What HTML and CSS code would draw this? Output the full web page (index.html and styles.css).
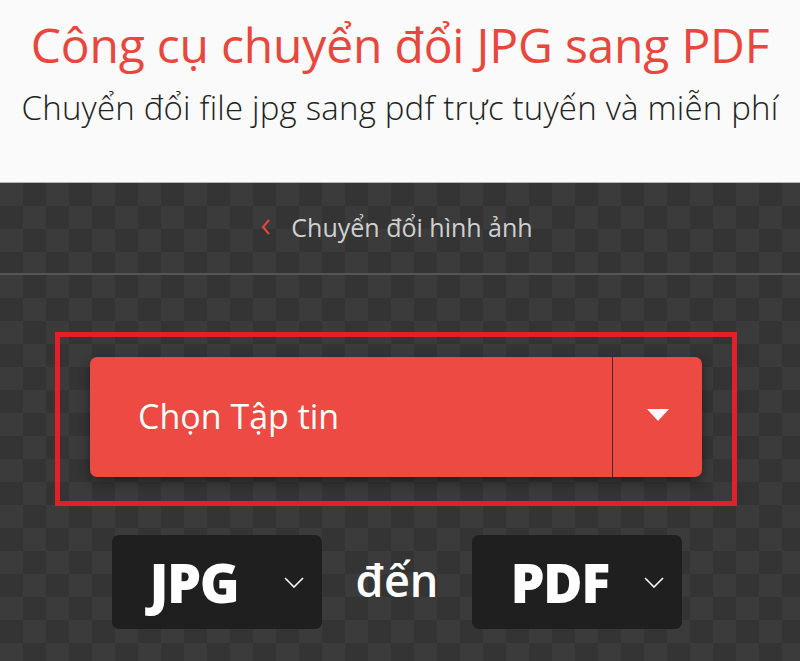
FILE: index.html
```html
<!DOCTYPE html>
<html lang="vi">
<head>
<meta charset="utf-8">
<title>JPG sang PDF</title>
<link rel="stylesheet" href="styles.css">
</head>
<body>
<header class="hero">
  <h1 class="title">Công cụ chuyển đổi JPG sang PDF</h1>
  <p class="subtitle">Chuyển đổi file jpg sang pdf trực tuyến và miễn phí</p>
</header>
<main class="stage">
  <nav class="crumb">
    <svg class="crumb-icon" width="10" height="18" viewBox="0 0 10 18"><path d="M8 2 L2 9 L8 16" fill="none" stroke="#e8473e" stroke-width="2"/></svg>
    <span class="crumb-text">Chuyển đổi hình ảnh</span>
  </nav>
  <section class="upload">
    <div class="highlight">
      <div class="btn">
        <span class="btn-label">Chọn Tập tin</span>
        <span class="btn-drop">
          <svg width="22" height="12" viewBox="0 0 22 12"><path d="M0 0 H22 L11 12 Z" fill="#fff"/></svg>
        </span>
      </div>
    </div>
    <div class="formats">
      <div class="select">
        <span class="select-text">JPG</span>
        <svg class="chev" width="20" height="11" viewBox="0 0 20 11"><path d="M1 1 L10 10 L19 1" fill="none" stroke="#fff" stroke-width="1.6"/></svg>
      </div>
      <span class="to">đến</span>
      <div class="select">
        <span class="select-text">PDF</span>
        <svg class="chev" width="20" height="11" viewBox="0 0 20 11"><path d="M1 1 L10 10 L19 1" fill="none" stroke="#fff" stroke-width="1.6"/></svg>
      </div>
    </div>
  </section>
</main>
</body>
</html>
```
FILE: styles.css
```css
html, body {
  margin: 0;
  padding: 0;
}
body {
  width: 800px;
  height: 661px;
  overflow: hidden;
  font-family: "Open Sans", "Noto Sans", sans-serif;
  background: #333;
}
.hero {
  height: 183px;
  background: #fafafa;
  border-bottom: 1px solid #b5b5b5;
  box-sizing: border-box;
  text-align: center;
  padding-top: 14px;
}
.title {
  margin: 0;
  font-weight: 400;
  font-size: 48px;
  line-height: 62px;
  color: #e8473e;
  letter-spacing: -0.2px;
}
.subtitle {
  margin: 11px 0 0;
  font-size: 33px;
  line-height: 42px;
  color: #222;
  font-weight: 300;
  letter-spacing: 0.2px;
}
.stage {
  height: 478px;
  background-color: #333;
  background-image: repeating-conic-gradient(#343434 0 25%, #3b3b3b 0 50%);
  background-size: 46px 46px;
  background-position: 0 0;
}
.crumb {
  height: 92px;
  box-sizing: border-box;
  border-bottom: 2px solid #555;
  display: flex;
  align-items: center;
  justify-content: center;
  gap: 20px;
  padding-bottom: 2px;
  padding-right: 6px;
}
.crumb-text {
  font-size: 25px;
  color: #d0d0d0;
  line-height: 32px;
}
.upload {
  padding-top: 57px;
}
.highlight {
  margin-left: 55px;
  width: 682px;
  height: 174px;
  box-sizing: border-box;
  border: 5px solid #e3202a;
  padding: 20px 30px 0 30px;
}
.btn {
  height: 120px;
  display: flex;
  background: #ec4a42;
  border-radius: 7px;
  box-shadow: 0 5px 12px rgba(0,0,0,0.4);
  color: #fff;
}
.btn-label {
  flex: 1;
  display: flex;
  align-items: center;
  padding-left: 48px;
  font-size: 34px;
  padding-bottom: 2px;
  border-right: 1px solid #4a2a28;
}
.btn-drop {
  width: 89px;
  display: flex;
  align-items: center;
  justify-content: center;
  padding-bottom: 4px;
}
.formats {
  display: flex;
  align-items: center;
  justify-content: center;
  margin-top: 29px;
  gap: 34px;
  padding-right: 6px;
}
.select {
  width: 210px;
  height: 94px;
  box-sizing: border-box;
  background: #1f1f1f;
  border-radius: 7px;
  display: flex;
  align-items: center;
  padding-left: 38px;
  padding-right: 18px;
}
.select-text {
  flex: 1;
  color: #fff;
  font-size: 54px;
  font-weight: 800;
  letter-spacing: -1.5px;
  line-height: 60px;
}
.to {
  color: #fff;
  font-size: 45px;
  font-weight: 600;
  line-height: 50px;
  padding-bottom: 4px;
}
```
